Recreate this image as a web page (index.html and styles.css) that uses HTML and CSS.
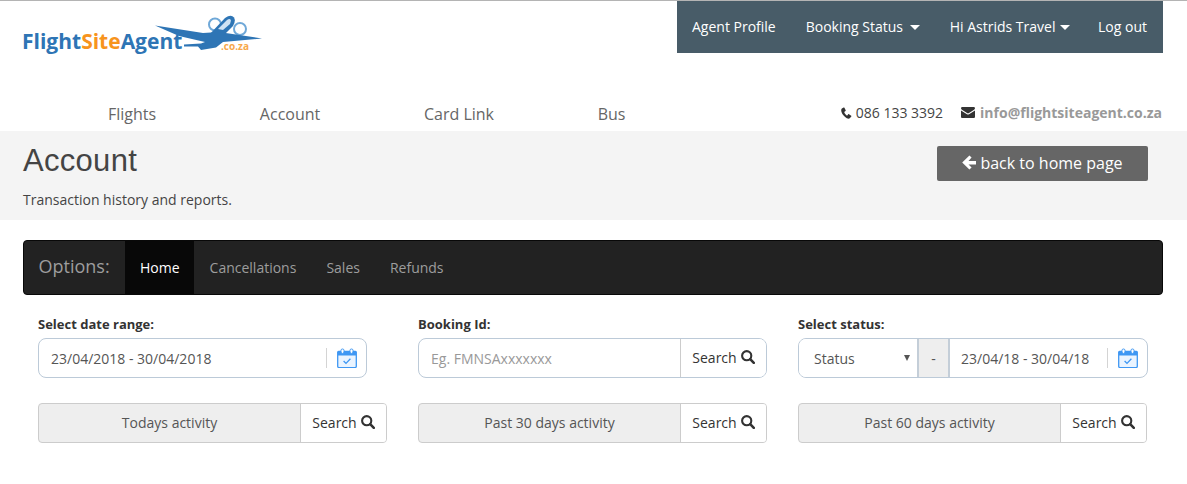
FILE: index.html
```html
<!DOCTYPE html>
<html lang="en">
<head>
<meta charset="utf-8">
<title>FlightSiteAgent - Account</title>
<link rel="stylesheet" href="styles.css">
</head>
<body>
<svg class="defs" width="0" height="0" aria-hidden="true">
  <defs>
    <symbol id="i-search" viewBox="0 0 14 14"><circle cx="5.700" cy="5.700" r="4.600" fill="none" stroke="currentColor" stroke-width="2.100"/><path d="M9.200 9.200l3.600 3.600" stroke="currentColor" stroke-width="2.600" stroke-linecap="round"/></symbol>
    <symbol id="i-cal" viewBox="0 0 20 20"><path d="M1.500 3.500h17a.8.8 0 0 1 .8.8v14a1.300 1.300 0 0 1-1.300 1.300H2a1.300 1.300 0 0 1-1.300-1.300v-14a.8.8 0 0 1 .8-.8z" fill="#eaf4ff" stroke="#3e97f3" stroke-width="1.300"/><path d="M1 3.600h18v3.900H1z" fill="#3e97f3"/><rect x="4" y="1" width="3" height="4.400" rx="1.400" fill="#fff" stroke="#3e97f3" stroke-width="1"/><rect x="13" y="1" width="3" height="4.400" rx="1.400" fill="#fff" stroke="#3e97f3" stroke-width="1"/><path d="M6.600 13l2.400 2.400 4.400-4.600" fill="none" stroke="#3e97f3" stroke-width="1.300"/></symbol>
  </defs>
</svg>

<header class="topbar">
  <a class="logo" href="#">
    <span class="logo-word">Flight<span class="logo-accent">Site</span>Agent</span>
    <svg class="logo-plane" width="108" height="38" viewBox="0 0 108 38" aria-hidden="true">
      <circle cx="60" cy="9.500" r="6" fill="#fff" stroke="#6fa8d8" stroke-width="2"/>
      <circle cx="85" cy="14" r="6" fill="#fff" stroke="#6fa8d8" stroke-width="2"/>
      <path d="M0 10.500L48 18L64 17L107 23.500L68 27L61 32.500L46 35L43 31.500L29 31.500L29 29.500L46 28.500L50 27L24 21Z" fill="#2e75b5"/>
      <path d="M53 21L70 3Q76 -1 79 2.500Q81 6 78 11L68 21Z" fill="#2e75b5"/>
      <path d="M63 14L72 5Q75 3 76 5.500L75 9L68 15Z" fill="#cfe2f3"/>
    </svg>
    <span class="logo-tld">.co.za</span>
  </a>
  <nav class="user-nav">
    <a href="#">Agent Profile</a>
    <a href="#">Booking Status <span class="caret caret-spaced"></span></a>
    <a href="#">Hi Astrids Travel <span class="caret"></span></a>
    <a href="#">Log out</a>
  </nav>
</header>

<div class="mainbar">
  <nav class="main-nav">
    <a href="#">Flights</a>
    <a href="#">Account</a>
    <a href="#">Card Link</a>
    <a href="#">Bus</a>
  </nav>
  <div class="contact">
    <span class="contact-item">
      <svg class="contact-icon" width="11" height="12" viewBox="0 0 11 12" aria-hidden="true"><path d="M2.600.6L.9 1.600C.2 2.300 0 3.500.5 5c.9 2.600 3 5 5.300 6.200 1.300.6 2.500.6 3.200-.1l1.300-1.500c.2-.3.200-.6-.1-.8L8 7.200c-.3-.2-.6-.1-.8.1l-.9 1.100c-.2.200-.4.200-.6.100C4.700 7.700 3.700 6.400 3.300 5.200c-.1-.2 0-.4.200-.5l1-.7c.2-.2.300-.5.200-.8L3.400.8C3.200.5 2.900.4 2.600.6z" fill="currentColor"/></svg>
      086 133 3392
    </span>
    <span class="contact-item contact-item-mail">
      <svg class="contact-icon" width="14" height="11" viewBox="0 0 14 11" aria-hidden="true"><path d="M1.300 0h11.400C13.500 0 14 .6 14 1.300c0 .6-.4 1.100-.9 1.500L7.600 6.300c-.4.200-.8.200-1.200 0L.9 2.800C.4 2.400 0 1.900 0 1.300 0 .6.500 0 1.300 0zM0 3.500l6 3.800c.6.400 1.400.4 2 0l6-3.800v6.200c0 .7-.6 1.300-1.300 1.300H1.300C.6 11 0 10.400 0 9.700z" fill="currentColor"/></svg>
      <a class="contact-mail" href="#">info@flightsiteagent.co.za</a>
    </span>
  </div>
</div>

<section class="page-head">
  <div class="page-head-text">
    <h1>Account</h1>
    <p>Transaction history and reports.</p>
  </div>
  <a class="back-btn" href="#">
    <svg width="14" height="15" viewBox="0 0 14 15" aria-hidden="true"><path d="M7.400.4L.2 7.500l7.200 7.100 2.200-2.200-3.100-3H14V6.100H6.500l3.100-3.500z" fill="currentColor"/></svg>
    back to home page
  </a>
</section>

<nav class="options">
  <span class="options-brand">Options:</span>
  <a class="active" href="#">Home</a>
  <a href="#">Cancellations</a>
  <a href="#">Sales</a>
  <a href="#">Refunds</a>
</nav>

<main class="filters">
  <div class="field">
    <label>Select date range:</label>
    <div class="control control-w1">
      <span class="value grow">23/04/2018 - 30/04/2018</span>
      <span class="cal"><svg width="20" height="20"><use href="#i-cal"/></svg></span>
    </div>
  </div>
  <div class="field">
    <label>Booking Id:</label>
    <div class="control">
      <span class="value grow placeholder">Eg. FMNSAxxxxxxx</span>
      <button class="search">Search <svg width="14" height="14"><use href="#i-search"/></svg></button>
    </div>
  </div>
  <div class="field">
    <label>Select status:</label>
    <div class="control control-w3">
      <span class="status-wrap"><select class="status"><option>Status</option></select></span>
      <span class="dash">-</span>
      <span class="value value-status grow">23/04/18 - 30/04/18</span>
      <span class="cal"><svg width="20" height="20"><use href="#i-cal"/></svg></span>
    </div>
  </div>

  <div class="activity"><span class="activity-label">Todays activity</span><button class="search">Search <svg width="14" height="14"><use href="#i-search"/></svg></button></div>
  <div class="activity"><span class="activity-label">Past 30 days activity</span><button class="search">Search <svg width="14" height="14"><use href="#i-search"/></svg></button></div>
  <div class="activity"><span class="activity-label">Past 60 days activity</span><button class="search">Search <svg width="14" height="14"><use href="#i-search"/></svg></button></div>
</main>
</body>
</html>
```

FILE: styles.css
```css
* { box-sizing: border-box; }
html, body { margin: 0; padding: 0; }
body {
  font-family: "Open Sans", sans-serif;
  font-size: 14px;
  color: #333;
  background: #fff;
  border-top: 1px solid #b4b4b4;
  overflow: hidden;
}
a { text-decoration: none; color: inherit; }
.defs { position: absolute; }

.topbar {
  display: flex;
  justify-content: space-between;
  height: 52px;
  padding: 0 24px 0 22px;
}
.logo { position: relative; display: block; width: 240px; height: 52px; }
.logo-word {
  position: absolute;
  left: 0;
  top: 27px;
  font-weight: 700;
  font-size: 21px;
  line-height: 27px;
  color: #2e75b5;
  white-space: nowrap;
}
.logo-accent { color: #f7941d; }
.logo-plane { position: absolute; left: 133px; top: 14px; }
.logo-tld {
  position: absolute;
  left: 199px;
  top: 39px;
  font-size: 10px;
  line-height: 12px;
  font-weight: 700;
  color: #f7a84a;
}
.user-nav {
  display: flex;
  align-items: center;
  width: 486px;
  height: 52px;
  padding: 0 0 2px 15px;
  background: #485c68;
  color: #fff;
  font-size: 14px;
}
.user-nav a { margin-right: 30px; white-space: nowrap; }
.user-nav a:last-child { margin-right: 0; }
.user-nav a:nth-child(3) { margin-right: 28px; }
.caret {
  display: inline-block;
  width: 0;
  height: 0;
  margin-left: 1px;
  vertical-align: 2px;
  border-top: 5px solid #fff;
  border-left: 5px solid transparent;
  border-right: 5px solid transparent;
}
.caret-spaced { margin-left: 3px; }

.mainbar {
  display: flex;
  justify-content: space-between;
  align-items: center;
  height: 78px;
  padding: 41px 25px 0 108px;
}
.main-nav { display: flex; gap: 103.700px; padding-top: 2px; font-size: 16px; color: #666; }
.contact { display: flex; gap: 18px; font-size: 14px; color: #444; }
.contact-item { display: flex; align-items: center; gap: 4px; white-space: nowrap; }
.contact-item-mail { gap: 5px; }
.contact-icon { color: #333; }
.contact-mail { font-weight: 700; color: #999; }

.page-head {
  display: flex;
  justify-content: space-between;
  height: 89px;
  padding: 15px 39px 0 23px;
  background: #f4f4f4;
}
.page-head h1 {
  margin: 0;
  font-family: "Liberation Sans", Arial, sans-serif;
  font-size: 31px;
  font-weight: 400;
  line-height: 30px;
  letter-spacing: .3px;
  color: #444;
}
.page-head p {
  margin: 14px 0 0;
  font-size: 14px;
  line-height: 20px;
  color: #444;
}
.back-btn {
  display: flex;
  align-items: center;
  justify-content: center;
  gap: 4px;
  width: 211px;
  height: 35px;
  padding-bottom: 2px;
  background: #666;
  border-radius: 2px;
  color: #fff;
  font-size: 16px;
}

.options {
  display: flex;
  align-items: stretch;
  height: 55px;
  margin: 20px 24px 0 23px;
  background: #222;
  border: 1px solid #080808;
  border-radius: 4px;
  color: #9d9d9d;
}
.options-brand {
  display: flex;
  align-items: center;
  width: 101px;
  height: 50px;
  padding-left: 14.500px;
  font-size: 18px;
}
.options a {
  display: flex;
  align-items: center;
  padding: 0 15px;
}
.options a.active { padding-right: 14.500px; background: #080808; color: #fff; }
.options a.active + a { padding-left: 15.500px; }

.filters {
  display: grid;
  grid-template-columns: repeat(3, 380px);
  row-gap: 25px;
  padding: 21px 0 0 38px;
}
.field label {
  display: block;
  height: 22px;
  font-size: 13px;
  font-weight: 700;
  line-height: 17px;
  color: #333;
}
.control {
  display: flex;
  align-items: stretch;
  width: 349px;
  height: 40px;
  background: #fff;
  border: 1px solid #bccad8;
  border-radius: 8px;
  overflow: hidden;
  color: #555;
}
.control-w1 { width: 329px; }
.control-w3 { width: 350px; }
.value { display: flex; align-items: center; padding-left: 12px; white-space: nowrap; }
.value-status { padding-left: 11px; }
.grow { flex: 1; }
.placeholder { color: #999; }
.cal {
  display: flex;
  align-items: center;
  padding: 0 9px 0 0;
}
.cal::before {
  content: "";
  width: 1px;
  height: 20px;
  margin-right: 10px;
  background: #d4d4d4;
}
.status-wrap {
  position: relative;
  width: 120px;
  border-right: 2px solid #c4ced8;
}
.status-wrap::after {
  content: "";
  position: absolute;
  right: 7px;
  top: 16px;
  border-top: 6px solid #555;
  border-left: 3px solid transparent;
  border-right: 3px solid transparent;
}
.status {
  appearance: none;
  width: 100%;
  height: 100%;
  padding-left: 15px;
  border: 0;
  background: #fff;
  font: inherit;
  color: #555;
}
.dash {
  display: flex;
  align-items: center;
  justify-content: center;
  width: 31px;
  background: #eee;
  border-right: 2px solid #c4ced8;
  color: #555;
}
.search {
  display: flex;
  align-items: center;
  justify-content: center;
  gap: 4px;
  width: 86px;
  padding: 0 0 2px;
  border: 0;
  border-left: 1px solid #ccc;
  background: #fff;
  color: #333;
  font: inherit;
}
.activity {
  display: flex;
  width: 349px;
  height: 40px;
  background: #eee;
  border: 1px solid #ccc;
  border-radius: 4px;
  overflow: hidden;
}
.activity-label {
  flex: 1;
  display: flex;
  align-items: center;
  justify-content: center;
  padding-bottom: 1px;
  color: #555;
}
```
